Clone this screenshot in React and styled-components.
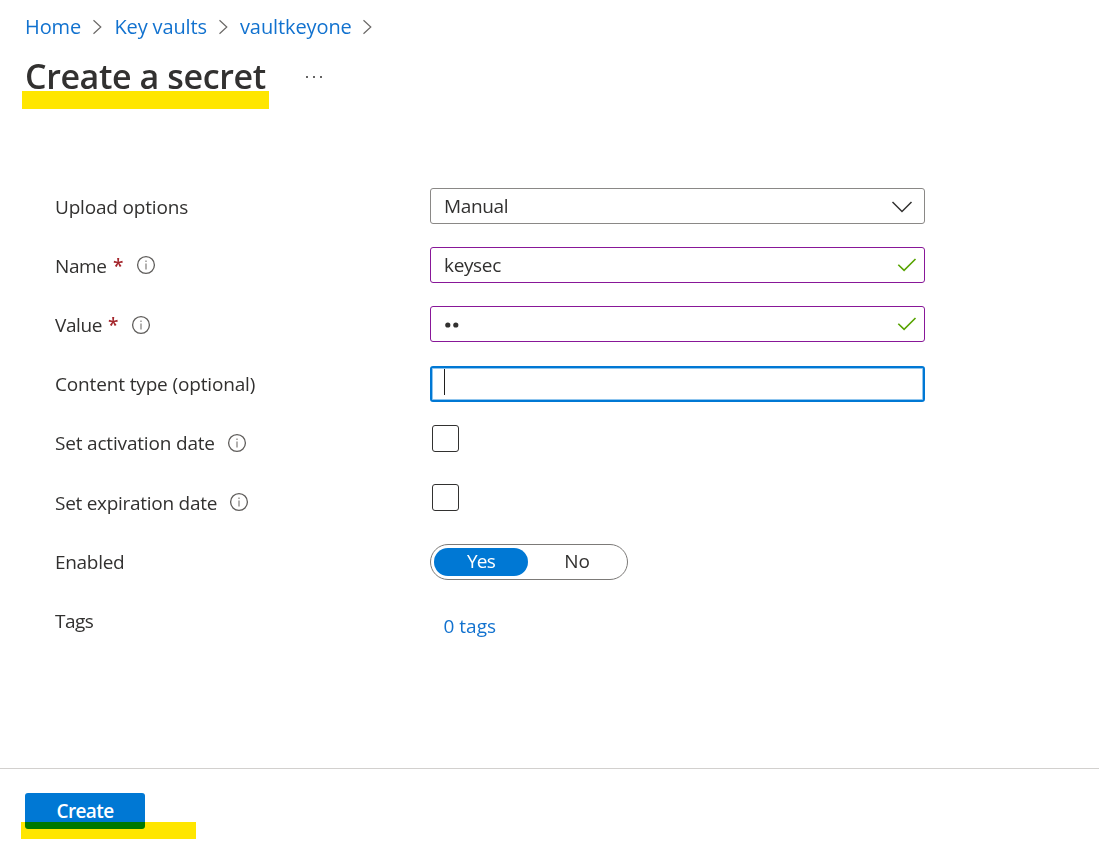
import React from "react";
import styled, { createGlobalStyle } from "styled-components";

const GlobalStyle = createGlobalStyle`
  * { box-sizing: border-box; }
  body {
    margin: 0;
    background: #fff;
    color: #323130;
    font-family: "Segoe UI", "Open Sans", "Noto Sans", sans-serif;
    font-size: 19px;
    overflow: hidden;
  }
`;

const Page = styled.main`
  display: flex;
  flex-direction: column;
  height: 844px;
`;

const Header = styled.header`
  height: 188px;
  padding: 12px 0 0 25px;
`;

const Breadcrumb = styled.nav`
  display: flex;
  align-items: center;
  height: 30px;
`;

const Text = styled.span`
  white-space: nowrap;
  letter-spacing: ${(p) => p.$track || 0}px;
`;

const Crumb = styled.a`
  flex: none;
  width: ${(p) => p.$width}px;
  color: #1272cf;
  font-size: 20px;
  line-height: 30px;
  white-space: nowrap;
  letter-spacing: ${(p) => p.$track || 0}px;
`;

const CrumbArrow = styled.svg`
  flex: none;
  width: 10px;
  height: 16px;
  margin: 0 12px 0 11px;
  fill: none;
  stroke: #6b6967;
  stroke-width: 1.2;
`;

const TitleRow = styled.div`
  display: flex;
  align-items: center;
  height: 48px;
  margin-top: 10px;
`;

const Title = styled.h1`
  position: relative;
  width: 240px;
  margin: 0;
  font-size: 34px;
  font-weight: 600;
  line-height: 48px;
  white-space: nowrap;
  letter-spacing: ${(p) => p.$track}px;
`;

const Marker = styled.span`
  position: absolute;
  left: ${(p) => p.$left}px;
  top: ${(p) => p.$top}px;
  width: ${(p) => p.$width}px;
  height: ${(p) => p.$height}px;
  background: #ffe600;
  mix-blend-mode: darken;
`;

const MoreIcon = styled.svg`
  width: 20px;
  height: 4px;
  margin: 2px 0 0 40px;
  fill: #323130;
`;

const Form = styled.form`
  flex: 1;
  padding-left: 55px;
`;

const Row = styled.div`
  display: grid;
  grid-template-columns: 375px 495px;
  align-items: start;
  height: 59.17px;
`;

const Label = styled.label`
  display: flex;
  align-items: center;
  height: 37.6px;
`;

const LabelText = styled(Text)`
  width: ${(p) => (p.$width ? `${p.$width}px` : "auto")};
`;

const Required = styled.span`
  width: 10px;
  margin-left: 6px;
  color: #a4262c;
  font-weight: 600;
`;

const InfoSvg = styled.svg`
  flex: none;
  width: 20px;
  height: 20px;
  margin: -1px 0 0 ${(p) => p.$gap}px;
  fill: none;
  stroke: #5f5d5b;
`;

const Field = styled.div`
  display: flex;
  align-items: center;
  justify-content: space-between;
  height: 36px;
  padding: 0 8px 0 13px;
  border: 1px solid ${(p) => p.$border};
  border-radius: 3px;
  line-height: 34px;
`;

const SelectField = styled(Field)`
  line-height: 36px;
`;

const FocusedField = styled(Field)`
  margin-top: 0.6px;
  padding-left: 12px;
  border: 2px solid #0078d4;
  box-shadow: inset 0 0 0 1px #8fc5ee;
`;

const Caret = styled.span`
  width: 1px;
  height: 26px;
  margin-bottom: 4px;
  background: #201f1e;
`;

const Dots = styled.svg`
  width: 16px;
  height: 8px;
  margin-top: 1px;
  fill: #323130;
`;

const Chevron = styled.svg`
  width: 22px;
  height: 14px;
  margin: 2px 3px 0 0;
  fill: none;
  stroke: #323130;
  stroke-width: 1.5;
`;

const Check = styled.svg`
  width: 20px;
  height: 16px;
  margin-right: -1px;
  fill: none;
  stroke: #57a300;
  stroke-width: 1.6;
`;

const Checkbox = styled.span`
  width: 27px;
  height: 27px;
  margin-left: 2px;
  border: 1px solid #323130;
  border-radius: 3px;
`;

const Toggle = styled.div`
  display: flex;
  width: 198px;
  height: 36px;
  margin-top: 1px;
  padding: 3px;
  border: 1px solid #7c7a78;
  border-radius: 18px;
`;

const Option = styled.span`
  flex: none;
  width: ${(p) => p.$width}px;
  height: 28px;
  border-radius: 14px;
  background: ${(p) => (p.$active ? "#0078d4" : "transparent")};
  color: ${(p) => (p.$active ? "#fff" : "#323130")};
  font-weight: ${(p) => (p.$active ? 500 : 400)};
  letter-spacing: ${(p) => p.$track || 0}px;
  line-height: 27px;
  text-align: center;
`;

const TagsLink = styled.a`
  padding: 5px 0 0 13.5px;
  color: #1272cf;
  line-height: 38px;
  letter-spacing: ${(p) => p.$track || 0}px;
`;

const Footer = styled.footer`
  height: 76px;
  padding: 24px 0 0 25px;
  border-top: 1px solid #d2d0ce;
`;

const CreateButton = styled.div`
  position: relative;
  width: 120px;
  height: 36px;
  border-radius: 3px;
  background: #0078d4;
  color: #fff;
  font-weight: 600;
  line-height: 36px;
  text-align: center;
  letter-spacing: ${(p) => p.$track || 0}px;
`;

const Arrow = () => (
  <CrumbArrow viewBox="0 0 10 16">
    <path d="M1.5 1.2 8.8 8 1.5 14.8" />
  </CrumbArrow>
);

const Info = ({ gap }) => (
  <InfoSvg viewBox="0 0 20 20" $gap={gap}>
    <circle cx="10" cy="10" r="8.4" strokeWidth="1.3" />
    <path d="M10 8.5v6M10 5.5v1.4" stroke="#8a8886" strokeWidth="1.3" />
  </InfoSvg>
);

const Valid = () => (
  <Check viewBox="0 0 20 16">
    <path d="M1.3 7.7 7.1 13.4 18.5 2" />
  </Check>
);

export default function App() {
  return (
    <Page>
      <GlobalStyle />
      <Header>
        <Breadcrumb>
          <Crumb $width={56.4} $track={-0.1}>Home</Crumb>
          <Arrow />
          <Crumb $width={92.6} $track={-0.12}>Key vaults</Crumb>
          <Arrow />
          <Crumb $width={111.5} $track={-0.1}>vaultkeyone</Crumb>
          <Arrow />
        </Breadcrumb>
        <TitleRow>
          <Title $track={-0.4}>
            Create a secret
            <Marker $left={-3} $top={39} $width={246.5} $height={18} />
          </Title>
          <MoreIcon viewBox="0 0 20 4">
            <circle cx="2" cy="2" r="1" />
            <circle cx="9" cy="2" r="1" />
            <circle cx="16" cy="2" r="1" />
          </MoreIcon>
        </TitleRow>
      </Header>
      <Form>
        <Row>
          <Label><LabelText $track={-0.18}>Upload options</LabelText></Label>
          <SelectField $border="#8a8886">
            <Text $track={-0.35}>Manual</Text>
            <Chevron viewBox="0 0 22 14">
              <path d="M1.5 2 11 11.5 20.5 2" />
            </Chevron>
          </SelectField>
        </Row>
        <Row>
          <Label>
            <LabelText $width={52} $track={-0.4}>Name</LabelText>
            <Required>*</Required>
            <Info gap={13} />
          </Label>
          <Field $border="#881798">
            <Text $track={-0.35}>keysec</Text>
            <Valid />
          </Field>
        </Row>
        <Row>
          <Label>
            <LabelText $width={47} $track={-0.4}>Value</LabelText>
            <Required>*</Required>
            <Info gap={13} />
          </Label>
          <Field $border="#881798">
            <Dots viewBox="0 0 16 8">
              <circle cx="3.8" cy="4" r="2.6" />
              <circle cx="11.8" cy="4" r="2.6" />
            </Dots>
            <Valid />
          </Field>
        </Row>
        <Row>
          <Label><LabelText $track={-0.15}>Content type (optional)</LabelText></Label>
          <FocusedField><Caret /></FocusedField>
        </Row>
        <Row>
          <Label>
            <LabelText $width={160} $track={-0.18}>Set activation date</LabelText>
            <Info gap={12} />
          </Label>
          <Checkbox />
        </Row>
        <Row>
          <Label>
            <LabelText $width={162} $track={-0.28}>Set expiration date</LabelText>
            <Info gap={12} />
          </Label>
          <Checkbox />
        </Row>
        <Row>
          <Label><LabelText $track={-0.3}>Enabled</LabelText></Label>
          <Toggle>
            <Option $active $width={94} $track={-0.7}>Yes</Option>
            <Option $width={98}>No</Option>
          </Toggle>
        </Row>
        <Row>
          <Label><LabelText $track={-0.5}>Tags</LabelText></Label>
          <TagsLink>0 tags</TagsLink>
        </Row>
      </Form>
      <Footer>
        <CreateButton $track={-0.6}>
          Create
          <Marker $left={-4} $top={29} $width={175} $height={17} />
        </CreateButton>
      </Footer>
    </Page>
  );
}
